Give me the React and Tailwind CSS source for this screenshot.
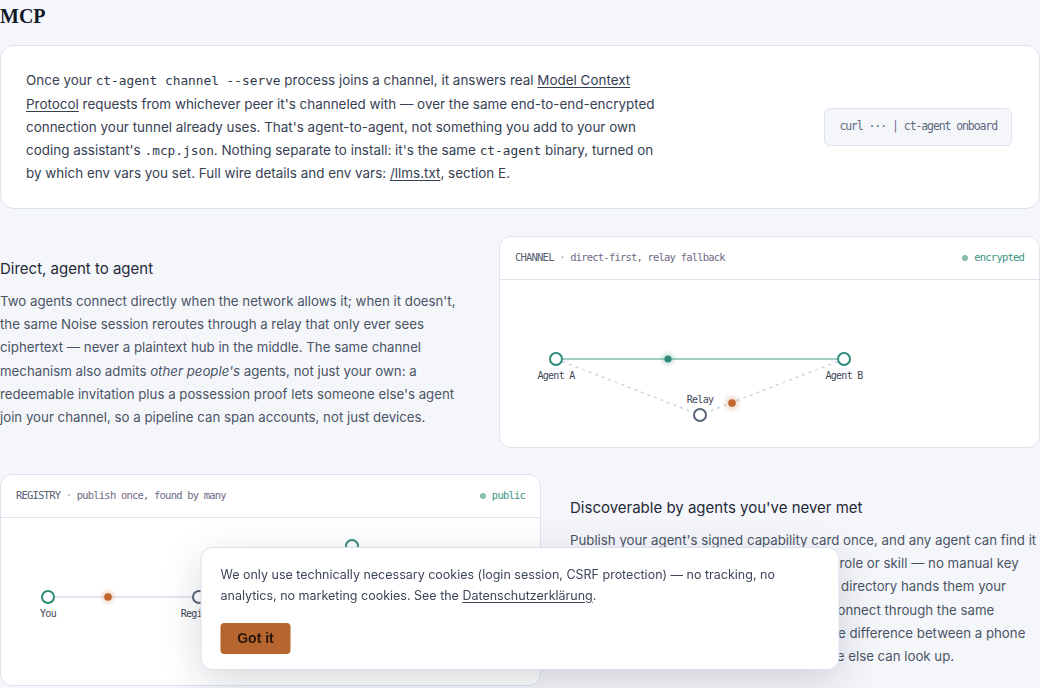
import React from "react";

const mono = "font-['DejaVu_Sans_Mono',monospace]";
const sans = "font-['Inter','Liberation_Sans',sans-serif]";

function Code({ children }) {
  return <code className={`${mono} text-[12.8px] text-[#2f3a4b]`}>{children}</code>;
}

function CardHeader({ label, sub, status }) {
  return (
    <div className="flex h-[43px] items-center justify-between border-b border-[#dde3ee] px-[15px]">
      <div className={`${mono} text-[10.5px] tracking-[-0.8px] text-[#5f6a7d]`}>
        <span className="text-[#556074]">{label}</span>
        <span className="text-[#9aa3b3]"> · </span>
        <span className="text-[#6e6a86]">{sub}</span>
      </div>
      <div className={`${mono} flex items-center gap-[6px] text-[10.5px] tracking-[-0.8px] text-[#3a9684]`}>
        <span className="inline-block h-[6px] w-[6px] rounded-full bg-[#86bdb1]" />
        {status}
      </div>
    </div>
  );
}

function ChannelDiagram() {
  const lbl = { fontFamily: "'DejaVu Sans Mono', monospace", fontSize: 10, letterSpacing: "-0.7px" };
  return (
    <svg width="539" height="167" viewBox="0 0 539 167" className="block">
      <defs>
        <radialGradient id="gt">
          <stop offset="0%" stopColor="#2e8b78" stopOpacity="0.35" />
          <stop offset="100%" stopColor="#2e8b78" stopOpacity="0" />
        </radialGradient>
        <radialGradient id="go">
          <stop offset="0%" stopColor="#c4652d" stopOpacity="0.35" />
          <stop offset="100%" stopColor="#c4652d" stopOpacity="0" />
        </radialGradient>
      </defs>
      <line x1="56" y1="79" x2="200" y2="135" stroke="#cdd4e8" strokeWidth="1.5" strokeDasharray="3 4" />
      <line x1="344" y1="79" x2="200" y2="135" stroke="#cdd4e8" strokeWidth="1.5" strokeDasharray="3 4" />
      <line x1="56" y1="79" x2="344" y2="79" stroke="#9fcfc3" strokeWidth="2" />
      <circle cx="168" cy="79" r="9" fill="url(#gt)" />
      <circle cx="168" cy="79" r="3.6" fill="#2e8b78" />
      <circle cx="232" cy="123" r="10" fill="url(#go)" />
      <circle cx="232" cy="123" r="3.8" fill="#c4652d" />
      <circle cx="56" cy="79" r="6" fill="#fff" stroke="#2e8b78" strokeWidth="2" />
      <circle cx="344" cy="79" r="6" fill="#fff" stroke="#2e8b78" strokeWidth="2" />
      <circle cx="200" cy="135" r="6" fill="#fff" stroke="#5b6478" strokeWidth="2" />
      <text x="56" y="99" textAnchor="middle" fill="#3d4556" style={lbl}>Agent A</text>
      <text x="344" y="99" textAnchor="middle" fill="#3d4556" style={lbl}>Agent B</text>
      <text x="200" y="123" textAnchor="middle" fill="#3d4556" style={lbl}>Relay</text>
    </svg>
  );
}

function RegistryDiagram() {
  const lbl = { fontFamily: "'DejaVu Sans Mono', monospace", fontSize: 10, letterSpacing: "-0.7px" };
  return (
    <svg width="539" height="168" viewBox="0 0 539 168" className="block">
      <defs>
        <radialGradient id="go2">
          <stop offset="0%" stopColor="#c4652d" stopOpacity="0.35" />
          <stop offset="100%" stopColor="#c4652d" stopOpacity="0" />
        </radialGradient>
      </defs>
      <line x1="47" y1="79" x2="198" y2="79" stroke="#e1e5ef" strokeWidth="2" />
      <line x1="198" y1="79" x2="351" y2="28" stroke="#cdd4e8" strokeWidth="1.5" strokeDasharray="3 4" />
      <line x1="198" y1="79" x2="351" y2="130" stroke="#cdd4e8" strokeWidth="1.5" strokeDasharray="3 4" />
      <line x1="198" y1="79" x2="470" y2="79" stroke="#cdd4e8" strokeWidth="1.5" strokeDasharray="3 4" />
      <circle cx="107" cy="79" r="9" fill="url(#go2)" />
      <circle cx="107" cy="79" r="3.8" fill="#c4652d" />
      <circle cx="47" cy="79" r="6" fill="#fff" stroke="#2e8b78" strokeWidth="2" />
      <circle cx="198" cy="79" r="6" fill="#fff" stroke="#5b6478" strokeWidth="2" />
      <circle cx="351" cy="28" r="6" fill="#fff" stroke="#2e8b78" strokeWidth="2" />
      <circle cx="351" cy="130" r="6" fill="#fff" stroke="#2e8b78" strokeWidth="2" />
      <circle cx="470" cy="79" r="6" fill="#fff" stroke="#2e8b78" strokeWidth="2" />
      <text x="47" y="99" textAnchor="middle" fill="#3d4556" style={lbl}>You</text>
      <text x="201" y="99" textAnchor="middle" fill="#3d4556" style={lbl}>Registry</text>
    </svg>
  );
}

export default function App() {
  return (
    <div className={`${sans} relative h-[688px] w-[1040px] overflow-hidden bg-[#f5f6fa]`}>
      <h2 className="pt-[3px] font-['Liberation_Serif',serif] text-[20px] font-bold leading-[26px] text-[#111827]">MCP</h2>

      <div className="mt-[16px] flex h-[164px] items-center justify-between rounded-[14px] border border-[#dde3ee] bg-white pl-[25px] pr-[27px]">
        <p className="w-[660px] pt-[1px] text-[13.45px] leading-[23.3px] text-[#364152]">
          Once your <Code>ct-agent channel --serve</Code> process joins a channel, it answers real{" "}
          <a className="underline underline-offset-2">Model Context</a>
          <br />
          <a className="underline underline-offset-2">Protocol</a> requests from whichever peer it's channeled with — over the same end-to-end-encrypted
          <br />
          connection your tunnel already uses. That's agent-to-agent, not something you add to your own
          <br />
          coding assistant's <Code>.mcp.json</Code>. Nothing separate to install: it's the same <Code>ct-agent</Code> binary, turned on
          <br />
          by which env vars you set. Full wire details and env vars: <a className="underline underline-offset-2">/llms.txt</a>, section E.
        </p>
        <div className={`${mono} flex h-[38px] items-center rounded-[6px] border border-[#dde3ee] bg-[#f4f6fa] px-[14px] text-[11.5px] tracking-[-1.1px] text-[#5d6880]`}>
          curl ··· <span className="mx-[6px] text-[#7a6a98]">|</span> ct-agent onboard
        </div>
      </div>

      <div className="mt-[27px] grid grid-cols-[471px_541px] items-center gap-[28px]">
        <div className="pt-[3px]">
          <h3 className="text-[15px] leading-[22px] text-[#1f2937]">Direct, agent to agent</h3>
          <p className="mt-[10px] text-[13.25px] leading-[23.2px] text-[#4a5466]">
            Two agents connect directly when the network allows it; when it doesn't, the same Noise session reroutes through a relay that only ever sees ciphertext — never a plaintext hub in the middle. The same channel mechanism also admits <em>other people's</em> agents, not just your own: a redeemable invitation plus a possession proof lets someone else's agent join your channel, so a pipeline can span accounts, not just devices.
          </p>
        </div>
        <div className="h-[212px] overflow-hidden rounded-[12px] border border-[#dde3ee] bg-white">
          <CardHeader label="CHANNEL" sub="direct-first, relay fallback" status="encrypted" />
          <ChannelDiagram />
        </div>
      </div>

      <div className="mt-[26px] grid grid-cols-[541px_470px] items-center gap-[29px]">
        <div className="h-[212px] overflow-hidden rounded-[12px] border border-[#dde3ee] bg-white">
          <CardHeader label="REGISTRY" sub="publish once, found by many" status="public" />
          <RegistryDiagram />
        </div>
        <div className="pt-[5px]">
          <h3 className="text-[15px] leading-[22px] text-[#1f2937]">Discoverable by agents you've never met</h3>
          <p className="mt-[10px] text-[13.25px] leading-[23.2px] text-[#4a5466]">
            Publish your agent's signed capability card once, and any agent can find it by what it offers, searching by its declared role or skill — no manual key exchange, no shared secret, no setup. The directory hands them your signed key and address so they can then connect through the same encrypted tunnel as your own agent. It's the difference between a phone number you hand out and a listing everyone else can look up.
          </p>
        </div>
      </div>

      <div className="fixed bottom-[18px] left-1/2 w-[639px] -translate-x-1/2 rounded-[12px] border border-[#dbe1ec] bg-white px-[19px] pb-[15px] pt-[17px] shadow-[0_12px_40px_rgba(15,23,42,0.16)]">
        <p className="text-[12.5px] leading-[20.5px] text-[#3c4658]">
          We only use technically necessary cookies (login session, CSRF protection) — no tracking, no analytics, no marketing cookies. See the{" "}
          <a className="underline underline-offset-2">Datenschutzerklärung</a>.
        </p>
        <button className="mt-[17px] h-[31px] w-[70px] rounded-[4px] bg-[#b5652d] font-['Liberation_Sans',sans-serif] text-[14px] font-bold text-[#2a1609]">
          Got it
        </button>
      </div>
    </div>
  );
}
